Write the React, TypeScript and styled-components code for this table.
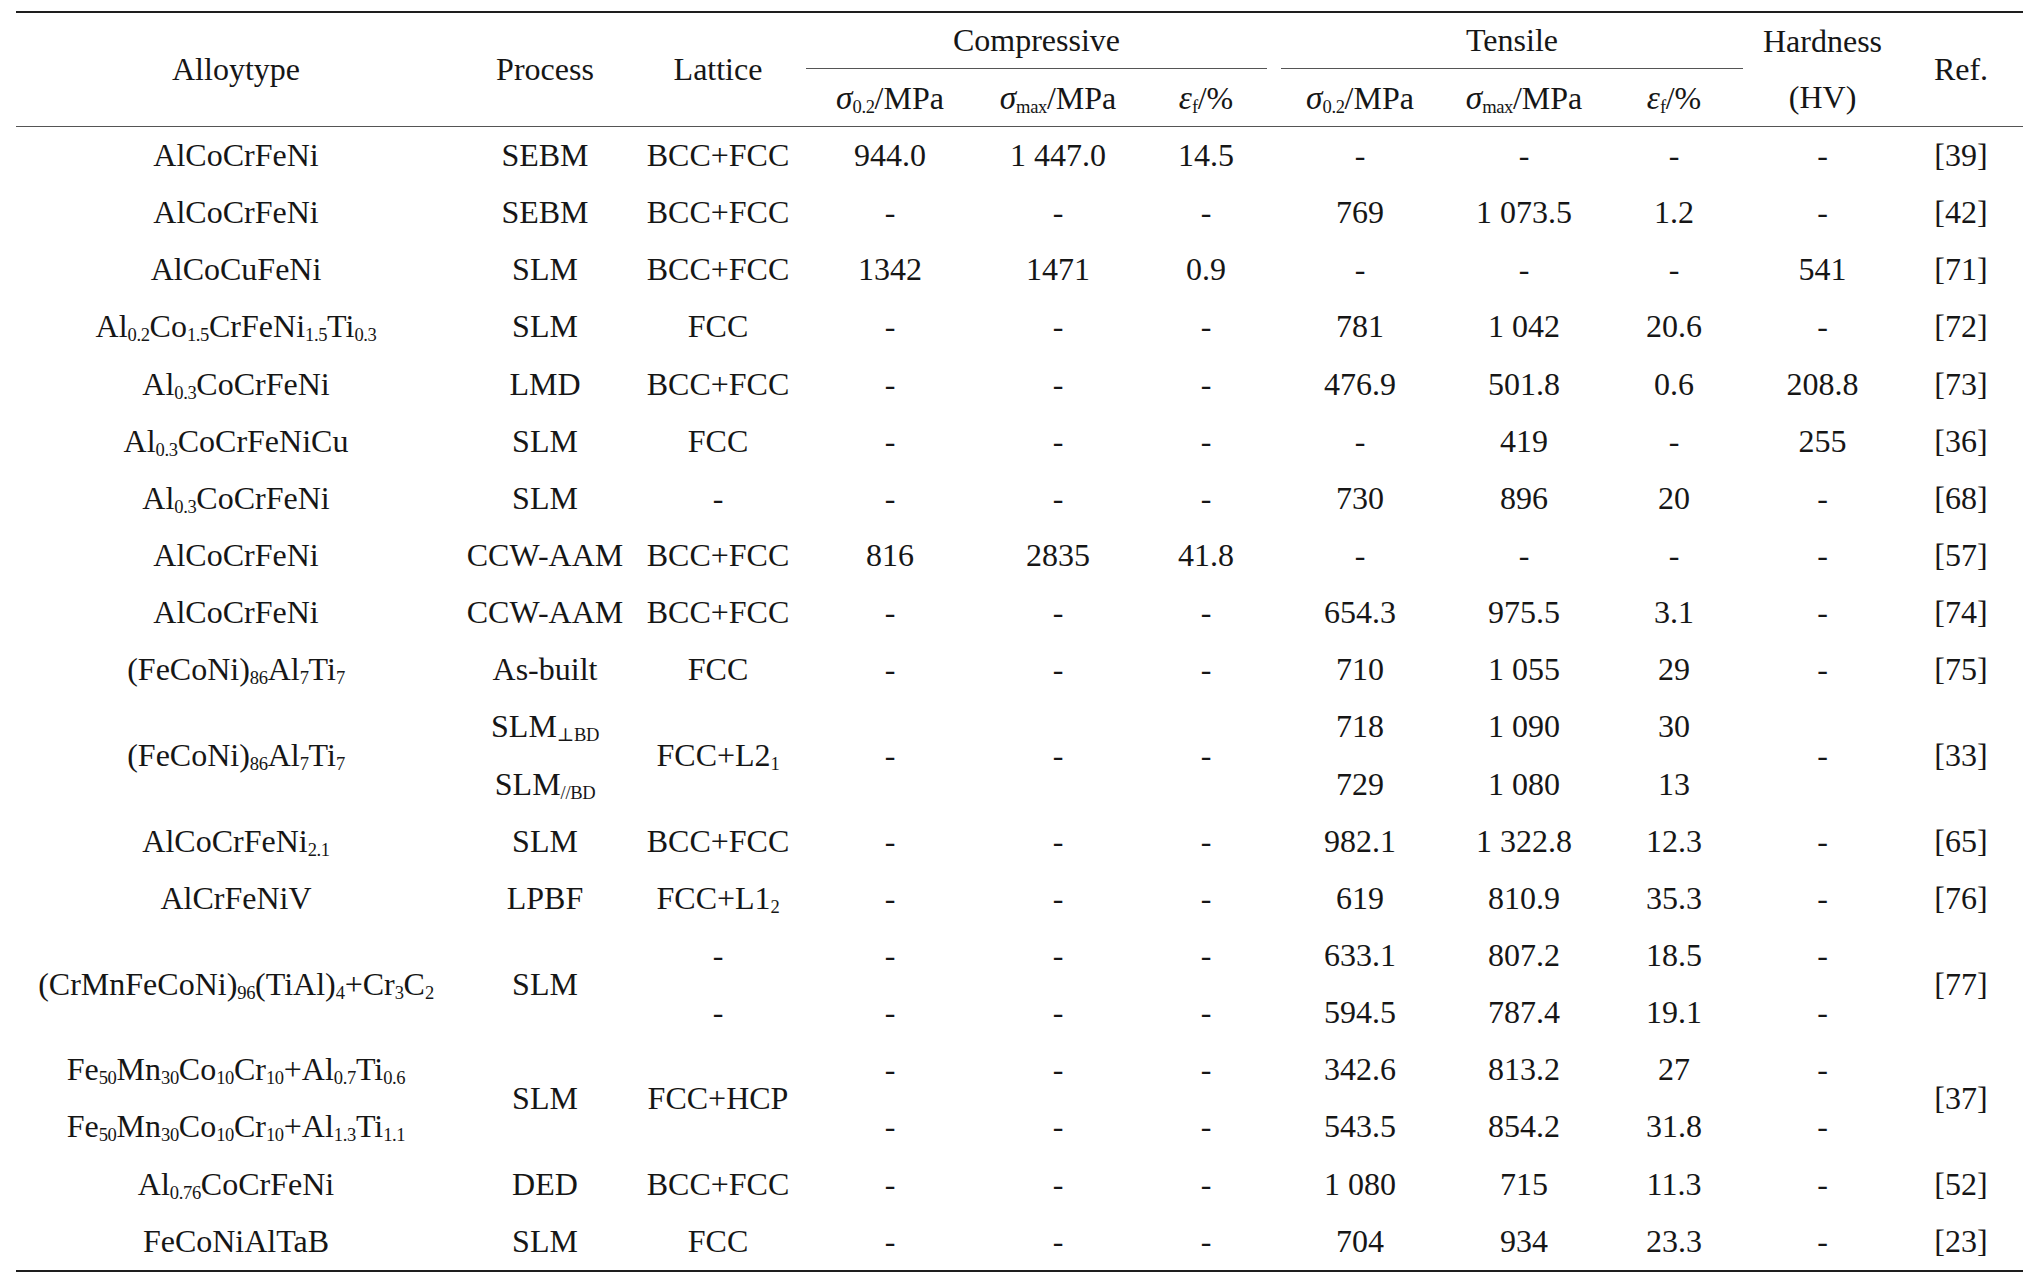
import React from "react";
import styled, { createGlobalStyle } from "styled-components";

const GlobalStyle = createGlobalStyle`
  html, body {
    margin: 0;
    padding: 0;
    background: #ffffff;
  }
  body {
    font-family: "Liberation Serif", "Times New Roman", "DejaVu Serif", serif;
    color: #161616;
  }
`;

const Table = styled.table`
  border-collapse: separate;
  border-spacing: 0;
  table-layout: fixed;
  width: 2007px;
  margin: 11px 0 0 16px;
  border-top: 2px solid #1e1e1e;
  border-bottom: 2px solid #1e1e1e;
  font-size: 32px;
`;

const HeadRow = styled.tr<{ $h: number }>`
  height: ${(p) => p.$h}px;
`;

const HeadCell = styled.th`
  padding: 0;
  font-weight: normal;
  text-align: center;
  vertical-align: middle;
  white-space: nowrap;
`;

const GroupCell = styled.th`
  padding: 0;
  font-weight: normal;
  text-align: center;
  vertical-align: top;
`;

const GroupLabel = styled.div<{ $l: number; $r: number }>`
  height: 54.5px;
  line-height: 54.5px;
  margin: 0 ${(p) => p.$r}px 0 ${(p) => p.$l}px;
  border-bottom: 1.5px solid #555;
  white-space: nowrap;
`;

const StackLine = styled.span<{ $h: number }>`
  display: block;
  height: ${(p) => p.$h}px;
  line-height: ${(p) => p.$h}px;
`;

const RuleRow = styled.tr`
  height: 1px;
  td {
    padding: 0;
    height: 1px;
    font-size: 0;
    line-height: 0;
    background: #555;
  }
`;

const BodyRow = styled.tr`
  height: 57.15px;
`;

const Cell = styled.td`
  padding: 0;
  text-align: center;
  vertical-align: middle;
  white-space: nowrap;
`;

const Sub = styled.sub`
  font-size: 0.58em;
  vertical-align: -0.22em;
  line-height: 0;
  letter-spacing: -0.02em;
`;

const Sym = styled.i`
  font-style: italic;
  font-size: 1.04em;
`;

const colWidths = [440, 178, 168, 176, 160, 136, 172, 156, 144, 153, 124];

type CellDef = string | [string, number];

const rows: CellDef[][] = [
  ["AlCoCrFeNi", "SEBM", "BCC+FCC", "944.0", "1 447.0", "14.5", "-", "-", "-", "-", "[39]"],
  ["AlCoCrFeNi", "SEBM", "BCC+FCC", "-", "-", "-", "769", "1 073.5", "1.2", "-", "[42]"],
  ["AlCoCuFeNi", "SLM", "BCC+FCC", "1342", "1471", "0.9", "-", "-", "-", "541", "[71]"],
  ["Al{0.2}Co{1.5}CrFeNi{1.5}Ti{0.3}", "SLM", "FCC", "-", "-", "-", "781", "1 042", "20.6", "-", "[72]"],
  ["Al{0.3}CoCrFeNi", "LMD", "BCC+FCC", "-", "-", "-", "476.9", "501.8", "0.6", "208.8", "[73]"],
  ["Al{0.3}CoCrFeNiCu", "SLM", "FCC", "-", "-", "-", "-", "419", "-", "255", "[36]"],
  ["Al{0.3}CoCrFeNi", "SLM", "-", "-", "-", "-", "730", "896", "20", "-", "[68]"],
  ["AlCoCrFeNi", "CCW-AAM", "BCC+FCC", "816", "2835", "41.8", "-", "-", "-", "-", "[57]"],
  ["AlCoCrFeNi", "CCW-AAM", "BCC+FCC", "-", "-", "-", "654.3", "975.5", "3.1", "-", "[74]"],
  ["(FeCoNi){86}Al{7}Ti{7}", "As-built", "FCC", "-", "-", "-", "710", "1 055", "29", "-", "[75]"],
  [
    ["(FeCoNi){86}Al{7}Ti{7}", 2],
    "SLM{⊥BD}",
    ["FCC+L2{1}", 2],
    ["-", 2],
    ["-", 2],
    ["-", 2],
    "718",
    "1 090",
    "30",
    ["-", 2],
    ["[33]", 2],
  ],
  ["SLM{//BD}", "729", "1 080", "13"],
  ["AlCoCrFeNi{2.1}", "SLM", "BCC+FCC", "-", "-", "-", "982.1", "1 322.8", "12.3", "-", "[65]"],
  ["AlCrFeNiV", "LPBF", "FCC+L1{2}", "-", "-", "-", "619", "810.9", "35.3", "-", "[76]"],
  [
    ["(CrMnFeCoNi){96}(TiAl){4}+Cr{3}C{2}", 2],
    ["SLM", 2],
    "-",
    "-",
    "-",
    "-",
    "633.1",
    "807.2",
    "18.5",
    "-",
    ["[77]", 2],
  ],
  ["-", "-", "-", "-", "594.5", "787.4", "19.1", "-"],
  [
    "Fe{50}Mn{30}Co{10}Cr{10}+Al{0.7}Ti{0.6}",
    ["SLM", 2],
    ["FCC+HCP", 2],
    "-",
    "-",
    "-",
    "342.6",
    "813.2",
    "27",
    "-",
    ["[37]", 2],
  ],
  ["Fe{50}Mn{30}Co{10}Cr{10}+Al{1.3}Ti{1.1}", "-", "-", "-", "543.5", "854.2", "31.8", "-"],
  ["Al{0.76}CoCrFeNi", "DED", "BCC+FCC", "-", "-", "-", "1 080", "715", "11.3", "-", "[52]"],
  ["FeCoNiAlTaB", "SLM", "FCC", "-", "-", "-", "704", "934", "23.3", "-", "[23]"],
];

function Formula({ text }: { text: string }) {
  const parts = text.split(/(\{[^}]*\})/).filter((s) => s.length > 0);
  return (
    <>
      {parts.map((p, i) =>
        p.startsWith("{") ? (
          <Sub key={i}>{p.slice(1, -1)}</Sub>
        ) : (
          <React.Fragment key={i}>{p.replace(/ /g, "\u00a0")}</React.Fragment>
        )
      )}
    </>
  );
}

function Quantity({ sym, sub, unit }: { sym: string; sub: string; unit: string }) {
  return (
    <>
      <Sym>{sym}</Sym>
      <Sub>{sub}</Sub>/{unit}
    </>
  );
}

export default function App() {
  return (
    <>
      <GlobalStyle />
      <Table>
        <colgroup>
          {colWidths.map((w, i) => (
            <col key={i} style={{ width: w }} />
          ))}
        </colgroup>
        <thead>
          <HeadRow $h={56}>
            <HeadCell rowSpan={2}>Alloytype</HeadCell>
            <HeadCell rowSpan={2}>Process</HeadCell>
            <HeadCell rowSpan={2}>Lattice</HeadCell>
            <GroupCell colSpan={3}>
              <GroupLabel $l={4} $r={7}>Compressive</GroupLabel>
            </GroupCell>
            <GroupCell colSpan={3}>
              <GroupLabel $l={7} $r={3}>Tensile</GroupLabel>
            </GroupCell>
            <HeadCell rowSpan={2}>
              <StackLine $h={56}>Hardness</StackLine>
              <StackLine $h={57}>(HV)</StackLine>
            </HeadCell>
            <HeadCell rowSpan={2}>Ref.</HeadCell>
          </HeadRow>
          <HeadRow $h={57}>
            <HeadCell>
              <Quantity sym="σ" sub="0.2" unit="MPa" />
            </HeadCell>
            <HeadCell>
              <Quantity sym="σ" sub="max" unit="MPa" />
            </HeadCell>
            <HeadCell>
              <Quantity sym="ε" sub="f" unit="%" />
            </HeadCell>
            <HeadCell>
              <Quantity sym="σ" sub="0.2" unit="MPa" />
            </HeadCell>
            <HeadCell>
              <Quantity sym="σ" sub="max" unit="MPa" />
            </HeadCell>
            <HeadCell>
              <Quantity sym="ε" sub="f" unit="%" />
            </HeadCell>
          </HeadRow>
          <RuleRow>
            <td colSpan={11} />
          </RuleRow>
        </thead>
        <tbody>
          {rows.map((r, ri) => (
            <BodyRow key={ri}>
              {r.map((c, ci) => {
                const text = typeof c === "string" ? c : c[0];
                const span = typeof c === "string" ? 1 : c[1];
                return (
                  <Cell key={ci} rowSpan={span}>
                    <Formula text={text} />
                  </Cell>
                );
              })}
            </BodyRow>
          ))}
        </tbody>
      </Table>
    </>
  );
}
